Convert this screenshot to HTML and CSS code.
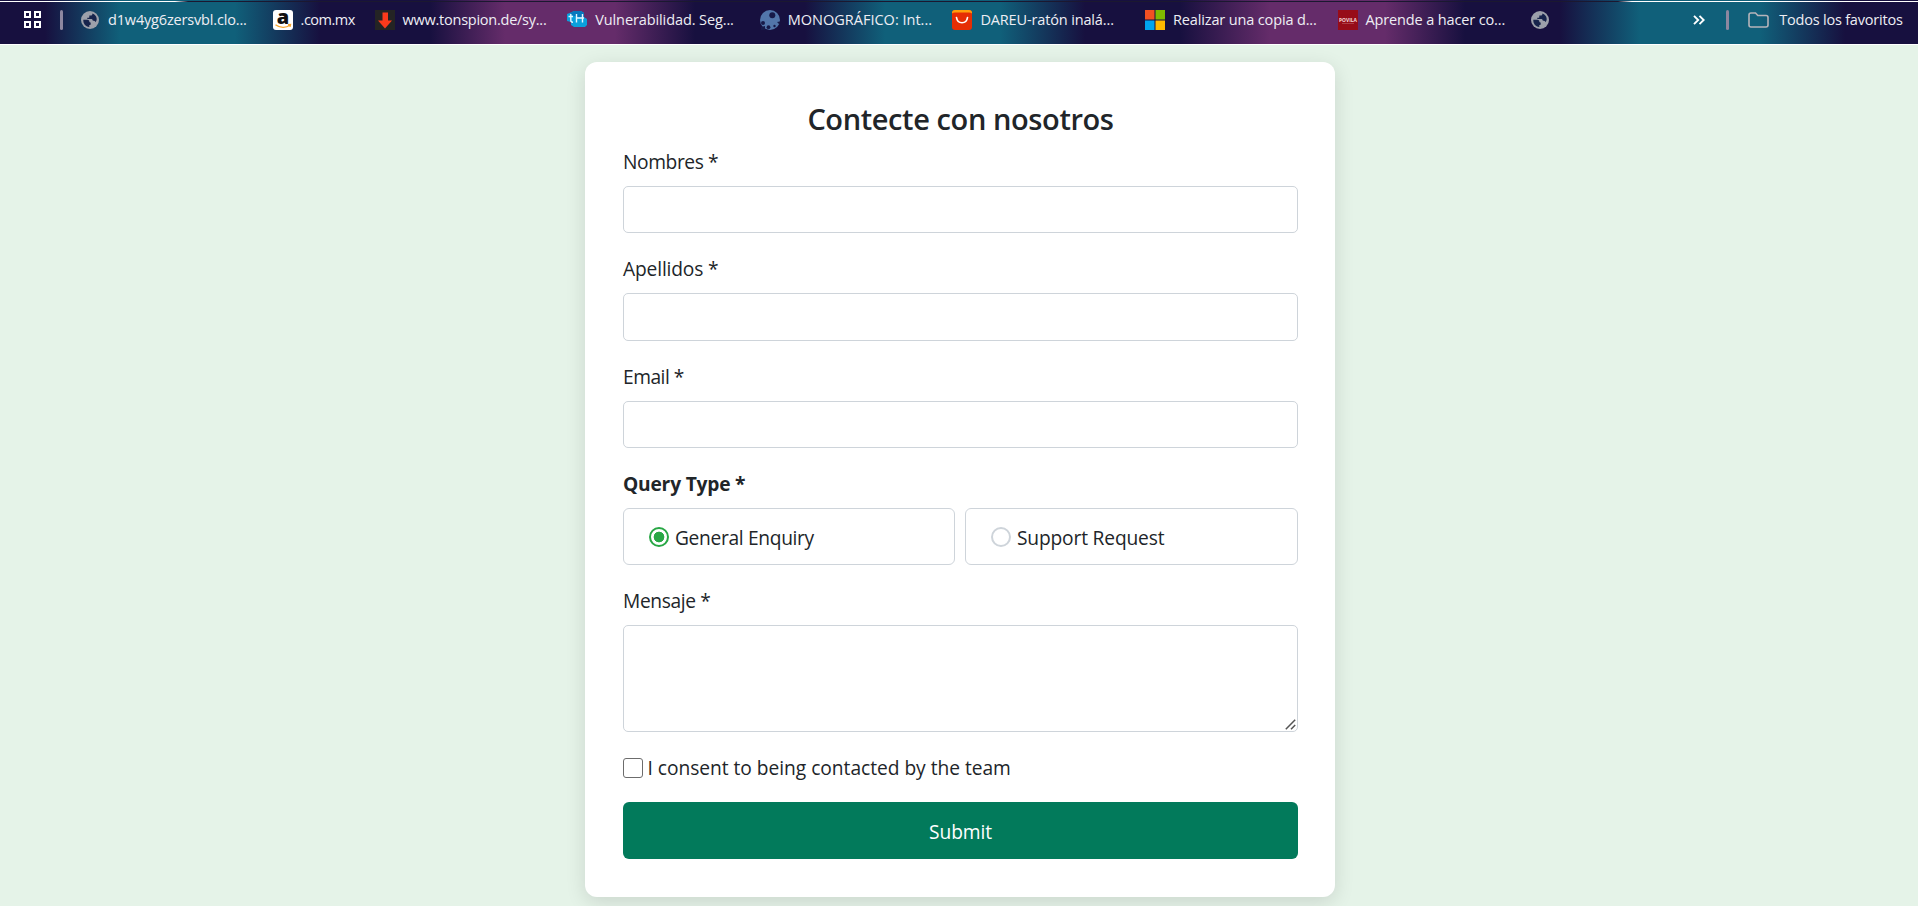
FILE: index.html
```html
<!DOCTYPE html>
<html lang="es">
<head>
<meta charset="utf-8">
<title>Contecte con nosotros</title>
<link rel="stylesheet" href="styles.css">
</head>
<body>
<svg class="defs" width="0" height="0">
  <symbol id="globe" viewBox="0 0 20 20">
    <circle cx="10" cy="10" r="9" fill="#9ca0aa"/>
    <path d="M3.3 9.8h4.2c1.2 0 1.8.8 1.8 1.8 0 .9.8 1 1.4 1v1.3c0 .8-.6 1.200-1.400 1.200v1.900C5.500 16.800 3 13.500 3.300 9.800zM12.400 3.400v.6c0 .9-.6 1.500-1.500 1.500H9.300v1.400c0 .6-.4.900-.9.900H7.300v1.300h3.700c1.100 0 1.800.7 1.800 1.700h1.100c1 0 1.400.8 1.600 1.500 1.300-1.300 1.600-3.600.7-5.500-.7-1.600-2.200-2.900-3.800-3.400z" fill="#17244c"/>
  </symbol>
</svg>
<nav class="bookmarks">
  <svg class="apps" viewBox="0 0 20 20" fill="none" stroke="#fff" stroke-width="2"><path d="M2 2h5v5H2zM12 2h5v5h-5zM2 12h5v5H2zM12 12h5v5h-5z"/></svg>
  <span class="divider"></span>
  <a class="mark"><svg class="icon"><use href="#globe"/></svg><span class="t1">d1w4yg6zersvbl.clo...</span></a>
  <a class="mark short">
    <svg class="icon" viewBox="0 0 20 20"><rect width="20" height="20" rx="3" fill="#fff"/><text x="10" y="13.500" text-anchor="middle" class="amazon">a</text><path d="M2.500 14.700c4.500 3.400 10.500 3.400 14.400.6M15 14.700l2.500-.2-.5 2.300" fill="none" stroke="#f6a52c" stroke-width="1.400"/></svg>
    <span class="t2">.com.mx</span></a>
  <a class="mark">
    <svg class="icon" viewBox="0 0 20 20"><path d="M0 0h20v20H0z" fill="#242424"/><path d="M7.500 2.500h5.500v8H17L10 18.500 3 10.500h4.500z" fill="#fc3a1c"/></svg>
    <span class="t3">www.tonspion.de/sy...</span></a>
  <a class="mark">
    <svg class="icon" viewBox="0 0 20 20"><path d="M4 2.500 7 1h7l3 2v4l3 2v6l-2 2H7l-3-2v-3L0 11V4z" fill="#0aa0dc"/><path d="M4 2.500 7 1h7l3 2v4h-6L4 5z" fill="#0878bd"/><path d="M3.800 4v6.500q0 1.700 2.200 1.700M1.500 6.500H6M9.500 4v8.500M9.500 8H17M15.500 4v8.500" fill="none" stroke="#e4f6ff" stroke-width="1.400"/></svg>
    <span class="t4">Vulnerabilidad. Seg...</span></a>
  <a class="mark">
    <svg class="icon" viewBox="0 0 20 20"><circle cx="10" cy="10" r="10" fill="#5276aa"/><g fill="#171a48"><circle cx="12.300" cy="5.300" r="3"/><circle cx="3" cy="13" r="2"/><circle cx="8.500" cy="17.200" r="1.900"/><circle cx="14.500" cy="16" r="1.200"/><path d="m17 12 3-.5V15zM1 17l4-1v4H1z"/></g></svg>
    <span class="t5">MONOGRÁFICO: Int...</span></a>
  <a class="mark">
    <svg class="icon" viewBox="0 0 20 20"><rect width="20" height="20" rx="3" fill="#e62e04"/><path d="M0 3.500V3a3 3 0 0 1 3-3h14a3 3 0 0 1 3 3v.5Q19 2.500 17 2.500H3Q1 2.500 0 3.500z" fill="#ff9f0c"/><path d="M4.500 7.500c1 7 10 7 11 0" fill="none" stroke="#fff" stroke-width="1.700" stroke-linecap="round"/></svg>
    <span class="t6">DAREU-ratón inalá...</span></a>
  <a class="mark">
    <svg class="icon" viewBox="0 0 20 20"><path d="M0 0h9.500v9.500H0z" fill="#f25022"/><path d="M10.500 0H20v9.500h-9.500z" fill="#7fba00"/><path d="M0 10.500h9.500V20H0z" fill="#00a4ef"/><path d="M10.500 10.500H20V20h-9.500z" fill="#ffb900"/></svg>
    <span class="t7">Realizar una copia d...</span></a>
  <a class="mark">
    <svg class="icon" viewBox="0 0 20 20"><path d="M0 0h20v20H0z" fill="#970c18"/><text x="10" y="11.500" text-anchor="middle" class="povila" textLength="18" lengthAdjust="spacingAndGlyphs">POVILA</text><path d="M4 13.500h12" stroke="#b34b52" stroke-width=".8"/></svg>
    <span class="t8">Aprende a hacer co...</span></a>
  <a class="mark last"><svg class="icon"><use href="#globe"/></svg></a>
  <svg class="chevrons" viewBox="0 0 12 10" fill="none" stroke="#fff" stroke-width="1.900"><path d="m1 .8 4.200 4.200L1 9.200M6.500.8 10.700 5 6.500 9.200"/></svg>
  <span class="divider"></span>
  <svg class="folder" viewBox="0 0 21 16" fill="none" stroke="#b5b4ba" stroke-width="1.600"><path d="M3 1h4.500l2.300 2.500H18a2 2 0 0 1 2 2V13a2 2 0 0 1-2 2H3a2 2 0 0 1-2-2V3a2 2 0 0 1 2-2z"/></svg>
  <span class="t9">Todos los favoritos</span>
</nav>
<main class="page">
  <form class="card">
    <h1 class="title"><span>Contecte con nosotros</span></h1>
    <label class="label" for="nombres"><span class="f1">Nombres *</span></label>
    <input class="field" id="nombres" type="text">
    <label class="label" for="apellidos"><span class="f2">Apellidos *</span></label>
    <input class="field field-tall" id="apellidos" type="text">
    <label class="label" for="email"><span class="f3">Email *</span></label>
    <input class="field" id="email" type="email">
    <div class="label label-bold"><span class="f4">Query Type *</span></div>
    <div class="options">
      <label class="option"><input class="radio" type="radio" name="query" checked><span class="f5">General Enquiry</span></label>
      <label class="option"><input class="radio" type="radio" name="query"><span class="f6">Support Request</span></label>
    </div>
    <label class="label" for="mensaje"><span class="f7">Mensaje *</span></label>
    <div class="message">
      <textarea class="field area" id="mensaje"></textarea>
      <svg class="grip" viewBox="0 0 11 11" fill="none" stroke="#555" stroke-width="1.500"><path d="M.8 10.200 10.200.8M6 10.200l4.200-4.200"/></svg>
    </div>
    <label class="consent"><input class="check" type="checkbox"><span class="f8">I consent to being contacted by the team</span></label>
    <button class="submit" type="button"><span class="f9">Submit</span></button>
  </form>
</main>
</body>
</html>
```
FILE: styles.css
```css
* { box-sizing: border-box; }
html, body { height: 100%; }
body {
  margin: 0;
  overflow: hidden;
  background: #e5f3e8;
  color: #212529;
  font: 19.200px/30px "Open Sans", "Noto Sans", sans-serif;
}
.defs { position: absolute; }

.bookmarks {
  display: flex;
  align-items: center;
  height: 45px;
  padding: 0 0 5px 22px;
  border-bottom: 1px solid #fff;
  white-space: nowrap;
  color: #eeeef4;
  font-size: 14.5px;
  line-height: 22px;
  background:
    linear-gradient(90deg, #fff 175px, #1b1830 188px, #1b1830 1618px, #fff 1632px) 0 1px / 100% 1px no-repeat,
    linear-gradient(90deg,
      #17103f 45px, #10607a 120px, #10607a 235px, #17103f 320px,
      #17103f 430px, #652c6a 505px, #652c6a 615px, #17103f 695px,
      #17103f 805px, #10607a 885px, #10607a 1000px, #17103f 1085px,
      #17103f 1180px, #652c6a 1270px, #652c6a 1385px, #17103f 1465px,
      #17103f 1560px, #10607a 1640px, #10607a 1760px, #17103f 1845px);
}
.apps { width: 20px; height: 20px; margin: 1px 18px 0 1px; flex: none; }
.divider { width: 3px; height: 20px; border-radius: 2px; background: #8d87a0; flex: none; }
.mark { display: flex; align-items: center; gap: 8px; width: 192.600px; flex: none; }
.apps + .divider { margin-right: 17px; margin-left: -1px; }
.mark.short { width: 102px; }
.mark.last { width: 163px; }
.icon { width: 20px; height: 20px; flex: none; overflow: visible; }
.bookmarks span { flex: none; }
.t1 { letter-spacing: -.17px; }
.t2 { letter-spacing: -.5px; }
.t3 { letter-spacing: -.25px; }
.t4 { letter-spacing: -.1px; }
.t6, .t7 { letter-spacing: -.14px; }
.t8 { letter-spacing: -.14px; }
.t9 { letter-spacing: -.2px; }
.amazon { font: 800 20px "Open Sans", sans-serif; fill: #111; }
.povila { font: bold 6px "Open Sans", sans-serif; fill: #f4dcdd; }
.chevrons { width: 12px; height: 10px; margin-right: 21px; flex: none; }
.folder { width: 21px; height: 16px; margin: 0 10px 0 19px; flex: none; }

.page { display: flex; justify-content: center; padding-top: 17px; }
.card {
  display: flex;
  flex-direction: column;
  width: 750px;
  height: 835px;
  margin-left: 2px;
  padding: 38px 37px 38px 38px;
  border-radius: 12px;
  background: #fff;
  box-shadow: 0 5px 20px rgba(0, 0, 0, .12);
}
.card > * { flex: none; }
.title {
  margin: 0 0 8px;
  text-align: center;
  font-size: 29px;
  line-height: 37px;
  height: 38px;
  font-weight: 600;
  letter-spacing: -.4px;
}
.label { height: 30px; padding-top: 1px; margin-bottom: 10px; white-space: nowrap; }
.f1 { letter-spacing: -.4px; }
.f2 { letter-spacing: -.15px; }
.f3 { letter-spacing: -.5px; }
.f4 { letter-spacing: -.2px; }
.f5 { letter-spacing: -.33px; }
.f6 { letter-spacing: -.17px; }
.f7 { letter-spacing: -.37px; }
.f8 { letter-spacing: -.03px; }
.f9 { letter-spacing: -.1px; }
.field {
  width: 100%;
  height: 47px;
  margin: 0 0 20px;
  padding: 0 15px;
  border: 1px solid #ced4da;
  border-radius: 5px;
  background: #fff;
}
.field-tall { height: 48px; }
.label-bold { font-weight: 700; }
.options { display: grid; grid-template-columns: 332px 1fr; gap: 10px; margin-bottom: 20px; }
.option {
  display: flex;
  align-items: center;
  gap: 6px;
  height: 57px;
  padding: 3px 25px 0;
  border: 1px solid #ced4da;
  border-radius: 6px;
}
.radio {
  appearance: none;
  width: 20px;
  height: 20px;
  margin: -3px 0 0;
  border: 2px solid #ced4da;
  border-radius: 50%;
}
.radio:checked { border-color: #28a745; background: radial-gradient(circle, #28a745 5px, #fff 5.700px); }
.message { position: relative; height: 107px; }
.area { display: block; height: 107px; resize: none; }
.grip { position: absolute; right: 2px; bottom: 2px; width: 11px; height: 11px; }
.consent { display: flex; align-items: center; gap: 4.500px; height: 30px; margin: 21px 0 19px; white-space: nowrap; }
.check {
  appearance: none;
  width: 20px;
  height: 20px;
  margin: 0;
  border: 1.500px solid #6c6c6c;
  border-radius: 3px;
  background: #fff;
}
.submit {
  height: 57px;
  padding: 2px 0 0;
  border: 0;
  border-radius: 6px;
  background: #027a5b;
  color: #fff;
  font: 500 19.200px/30px "Open Sans", sans-serif;
}
```
